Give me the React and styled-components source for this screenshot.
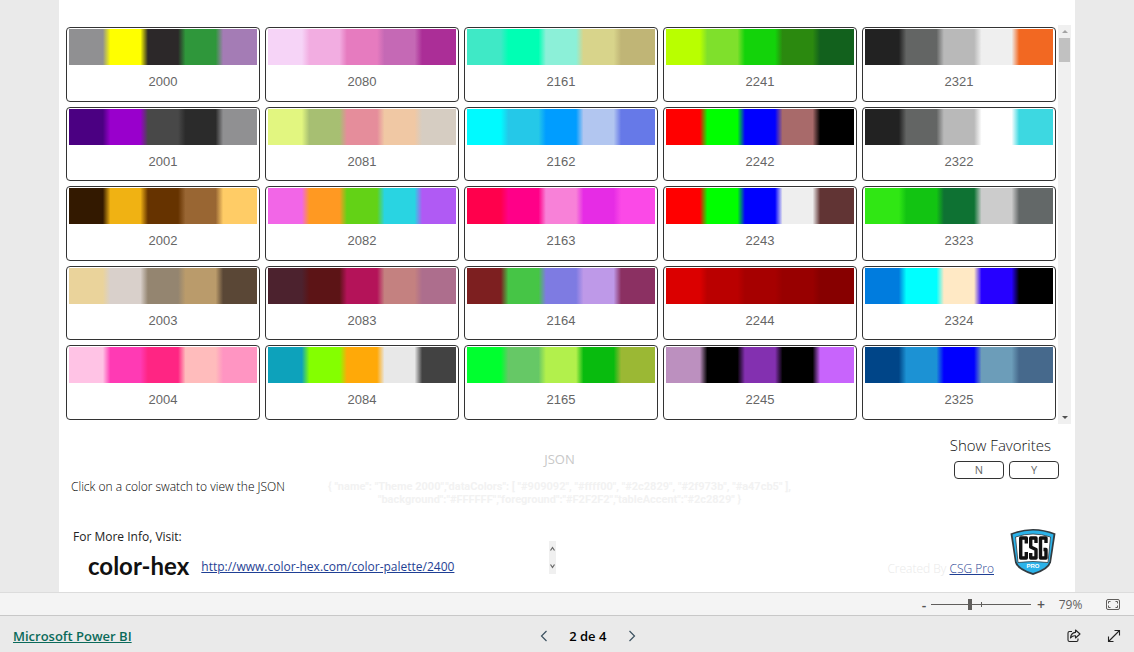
import React, { useState } from 'react';
import styled, { createGlobalStyle } from 'styled-components';

const sans = "'Open Sans', 'Noto Sans', sans-serif";

const palettes = [
  { id: 2000, colors: ['#909092', '#ffff00', '#2c2829', '#2f973b', '#a47cb5'] },
  { id: 2080, colors: ['#f6d4f7', '#f2ade1', '#e67bbf', '#c569b5', '#ab2e97'] },
  { id: 2161, colors: ['#3fe9c6', '#00ffb4', '#8cf0d8', '#d8d48b', '#c0b576'] },
  { id: 2241, colors: ['#b9ff00', '#7fe02c', '#13d30a', '#2b890f', '#12611d'] },
  { id: 2321, colors: ['#222222', '#636564', '#b9b9b9', '#efefef', '#f26822'] },
  { id: 2001, colors: ['#4b0082', '#9900cc', '#484848', '#2b2b2b', '#909092'] },
  { id: 2081, colors: ['#e2f680', '#a7bf72', '#e58d9b', '#f0c8a4', '#d6cdc2'] },
  { id: 2162, colors: ['#00faff', '#25c8e8', '#009dff', '#b2c6f0', '#6679e8'] },
  { id: 2242, colors: ['#ff0000', '#00ff00', '#0000ff', '#a86a6a', '#000000'] },
  { id: 2322, colors: ['#222222', '#636564', '#b9b9b9', '#ffffff', '#3dd8e1'] },
  { id: 2002, colors: ['#331900', '#f0b213', '#663300', '#996633', '#ffcc66'] },
  { id: 2082, colors: ['#f266e7', '#ff9922', '#63d216', '#29d4e2', '#b05af4'] },
  { id: 2163, colors: ['#ff004c', '#ff0088', '#f881d8', '#e62ce5', '#fb49e7'] },
  { id: 2243, colors: ['#ff0000', '#00ff00', '#0000ff', '#eeeeee', '#613434'] },
  { id: 2323, colors: ['#30e714', '#12c412', '#0e7233', '#cccccc', '#636868'] },
  { id: 2003, colors: ['#ead39b', '#d9d0cb', '#948570', '#ba9b6b', '#5a4736'] },
  { id: 2083, colors: ['#4c222e', '#5c1416', '#b41359', '#c48180', '#ad6e8d'] },
  { id: 2164, colors: ['#7d1f20', '#46c546', '#7e7be2', '#be99e8', '#8b3062'] },
  { id: 2244, colors: ['#db0000', '#ba0000', '#a60000', '#980000', '#870000'] },
  { id: 2324, colors: ['#007cde', '#00ffff', '#ffe9c5', '#2600ff', '#000000'] },
  { id: 2004, colors: ['#ffc3e5', '#ff3ab4', '#ff2583', '#ffbcbc', '#ff95c2'] },
  { id: 2084, colors: ['#0da2bb', '#84ff00', '#ffa908', '#e8e8e8', '#424242'] },
  { id: 2165, colors: ['#00ff2f', '#66c866', '#b2f04c', '#08bb0e', '#9bb834'] },
  { id: 2245, colors: ['#bc90bf', '#000000', '#8330b0', '#000000', '#c864fc'] },
  { id: 2325, colors: ['#004588', '#1c92d4', '#0000ff', '#6c9db9', '#46698c'] },
];

// five bands, with a short soft edge between neighbours
const bands = (colors) =>
  colors
    .map((c, i) => `${c} ${i === 0 ? 0 : i * 20 + 2}%, ${c} ${i === 4 ? 100 : i * 20 + 18}%`)
    .join(', ');

const Palette = ({ id, colors, onPick }) => (
  <Card type="button" onClick={() => onPick(id)}>
    <Swatch $colors={colors} />
    <CardLabel>{id}</CardLabel>
  </Card>
);

const Shield = () => (
  <svg width="46" height="48" viewBox="0 0 46 48" role="img" aria-label="CSG Pro">
    <path d="M.500 5.500Q23 -3.500 45.500 5.500L41 34.500Q39 42 23 47Q7 42 5 34.500Z" fill="#333b40" />
    <path d="M2.500 6.500Q23 -1.500 43.500 6.500L39.500 33.500Q37.500 40.500 23 45Q8.500 40.500 6.500 33.500Z" fill="#2bb3ea" />
    <path d="M5.500 9Q23 3 40.500 9L38 34.500Q23 32.500 8 34.500Z" fill="#fff" stroke="#333b40" strokeWidth=".8" />
    <g fill="none" stroke="#111" strokeWidth="3.400" strokeLinejoin="round">
      <path d="M16.300 15.500V10H10.700V30H16.300V24" />
      <path d="M26 15V10H20.700V19L26 21.500V30H20.700V25" />
      <path d="M36 15V10H30.500V30H36V21.500H33.500" />
    </g>
    <text x="23" y="40" textAnchor="middle" fontFamily="Liberation Sans, sans-serif" fontSize="6" fontWeight="700" fill="#fff">PRO</text>
  </svg>
);

const FitIcon = () => (
  <svg width="14" height="11" viewBox="0 0 14 11" fill="none" stroke="#605e5c">
    <rect x=".5" y=".5" width="13" height="10" rx="1.500" />
    <path d="M2.500 4.500V2.500H4.500M9.500 2.500H11.500V4.500M11.500 6.500V8.500H9.500M4.500 8.500H2.500V6.500" />
  </svg>
);

const ShareIcon = () => (
  <svg width="14" height="14" viewBox="0 0 14 14" fill="none" stroke="#222" strokeWidth="1.100" strokeLinejoin="round">
    <path d="M5 2.500H2.500Q1 2.500 1 4V11Q1 12.500 2.500 12.500H9.500Q11 12.500 11 11V9.500" />
    <path d="M8.500 1L13 5L8.500 9V6.800Q5.500 6.500 3.500 9Q4 3.800 8.500 3.400Z" />
  </svg>
);

const ExpandIcon = () => (
  <svg width="14" height="14" viewBox="0 0 14 14" fill="none" stroke="#222" strokeWidth="1.100">
    <path d="M1.500 12.500L12.500 1.500M7.500 1.500H12.500V6.500M1.500 7.500V12.500H6.500" />
  </svg>
);

const Chevron = ({ d }) => (
  <svg width="8" height="12" viewBox="0 0 8 12" fill="none" stroke="#3b5160" strokeWidth="1.200">
    <path d={d} />
  </svg>
);

const App = () => {
  const [, setPicked] = useState(2000);
  const [zoom, setZoom] = useState(79);

  return (
    <Page>
      <Global />
      <Report>
        <Canvas>
          <Gallery>
            <Grid>
              {palettes.map((p) => (
                <Palette key={p.id} id={p.id} colors={p.colors} onPick={setPicked} />
              ))}
            </Grid>
            <Track>
              <Arrow $color="#a3a3a3" />
              <Thumb />
              <Arrow $down $color="#505050" />
            </Track>
          </Gallery>

          <Details>
            <Hint>Click on a color swatch to view the JSON</Hint>
            <Json>
              <JsonTitle>JSON</JsonTitle>
              <JsonText>
                {'{ "name": "Theme 2000","dataColors": [ "#909092", "#ffff00", "#2c2829", "#2f973b", "#a47cb5" ],'}
                <br />
                {'"background":"#FFFFFF","foreground":"#F2F2F2","tableAccent":"#2c2829" }'}
              </JsonText>
            </Json>
            <Favorites>
              <FavTitle>Show Favorites</FavTitle>
              <FavRow>
                <FavButton type="button">N</FavButton>
                <FavButton type="button">Y</FavButton>
              </FavRow>
            </Favorites>
          </Details>

          <Info>
            <Source>
              <InfoText>For More Info, Visit:</InfoText>
              <SourceRow>
                <Wordmark>color-hex</Wordmark>
                <TextLink href="#palette">http://www.color-hex.com/color-palette/2400</TextLink>
              </SourceRow>
            </Source>
            <MiniTrack>
              <svg width="7" height="33" viewBox="0 0 7 33" fill="none" stroke="#666" strokeWidth="1.200">
                <path d="M1.500 9.500L3.500 6.500L5.500 9.500M1.500 23.500L3.500 26.500L5.500 23.500" />
              </svg>
            </MiniTrack>
            <Credit>
              <CreditText>
                Created By <TextLink href="#csg">CSG Pro</TextLink>
              </CreditText>
              <Shield />
            </Credit>
          </Info>
        </Canvas>
      </Report>

      <ZoomBar>
        <ZoomButton type="button" aria-label="Zoom out" onClick={() => setZoom(zoom - 1)}>-</ZoomButton>
        <Slider
          type="range"
          min="10"
          max="187"
          value={zoom}
          aria-label="Zoom"
          onChange={(e) => setZoom(Number(e.target.value))}
        />
        <ZoomButton type="button" aria-label="Zoom in" onClick={() => setZoom(zoom + 1)}>+</ZoomButton>
        <ZoomValue>{zoom}%</ZoomValue>
        <IconButton type="button" aria-label="Fit to page"><FitIcon /></IconButton>
      </ZoomBar>

      <Footer>
        <Brand href="#powerbi">Microsoft Power BI</Brand>
        <Pager>
          <IconButton type="button" aria-label="Previous page"><Chevron d="M6.500 1L1.500 6L6.500 11" /></IconButton>
          <PageCount>2 de 4</PageCount>
          <IconButton type="button" aria-label="Next page"><Chevron d="M1.500 1L6.500 6L1.500 11" /></IconButton>
        </Pager>
        <Tools>
          <IconButton type="button" aria-label="Share"><ShareIcon /></IconButton>
          <IconButton type="button" aria-label="Full screen"><ExpandIcon /></IconButton>
        </Tools>
      </Footer>
    </Page>
  );
};

export default App;

const Global = createGlobalStyle`
  * { box-sizing: border-box; }
  body {
    margin: 0;
    font-family: ${sans};
    background: #eaeaea;
  }
  button {
    font-family: inherit;
    cursor: pointer;
  }
  svg { display: block; }
`;

const Page = styled.div`
  display: flex;
  flex-direction: column;
  min-height: 100vh;
`;

const Report = styled.main`
  flex: 1;
  display: flex;
  padding: 0 59px;
`;

const Canvas = styled.div`
  flex: 1;
  min-width: 0;
  padding: 25px 4px 0 7px;
  background: #fff;
`;

const Gallery = styled.section`
  display: flex;
  gap: 2px;
`;

const Grid = styled.div`
  flex: 1;
  display: grid;
  grid-template-columns: repeat(5, 1fr);
  grid-auto-rows: 1fr;
  gap: 5px;
  height: 395px;
  padding-top: 2px;
`;

const Card = styled.button`
  display: flex;
  flex-direction: column;
  min-width: 0;
  padding: 1px;
  border: 1px solid #333;
  border-radius: 4px;
  background: #fff;
`;

const Swatch = styled.span`
  align-self: stretch;
  height: 36px;
  margin: 0 1px;
  background: linear-gradient(to right, ${(p) => bands(p.$colors)});
`;

const CardLabel = styled.span`
  align-self: center;
  margin-top: 7px;
  font-family: 'Liberation Sans', sans-serif;
  font-size: 13px;
  line-height: 20px;
  color: #666;
`;

const Track = styled.div`
  display: flex;
  flex-direction: column;
  align-items: center;
  width: 13px;
  height: 399px;
  padding: 5px 0;
  background: #f0f0f0;
`;

const Arrow = styled.span`
  margin-top: ${(p) => (p.$down ? 'auto' : '0')};
  border: 3px solid transparent;
  border-top: ${(p) => (p.$down ? `3px solid ${p.$color}` : '0')};
  border-bottom: ${(p) => (p.$down ? '0' : `3px solid ${p.$color}`)};
`;

const Thumb = styled.span`
  width: 11px;
  height: 24px;
  margin-top: 5px;
  background: #c1c1c1;
`;

const Details = styled.section`
  display: grid;
  grid-template-columns: 240px 1fr 258px;
  height: 103px;
`;

const Hint = styled.p`
  margin: 53px 0 0 5px;
  font-size: 12px;
  font-weight: 300;
  line-height: 20px;
  white-space: nowrap;
  color: #000;
`;

const Json = styled.div`
  padding-top: 25px;
  text-align: center;
`;

const JsonTitle = styled.h2`
  margin: 0;
  font-size: 13px;
  font-weight: 400;
  line-height: 20px;
  color: #c8c8c8;
`;

const JsonText = styled.p`
  margin: 11px 0 0;
  font-family: Roboto, sans-serif;
  font-size: 11px;
  font-weight: 700;
  line-height: 13px;
  white-space: nowrap;
  color: #f2f2f2;
`;

const Favorites = styled.div`
  display: flex;
  flex-direction: column;
  align-items: flex-end;
  padding: 11px 12px 0 0;
`;

const FavTitle = styled.h2`
  margin: 0;
  padding-right: 8px;
  font-size: 15px;
  font-weight: 300;
  line-height: 20px;
  color: #111;
`;

const FavRow = styled.div`
  display: flex;
  gap: 5px;
  margin-top: 6px;
`;

const FavButton = styled.button`
  width: 50px;
  height: 18px;
  padding: 0;
  border: 1px solid #333;
  border-radius: 4px;
  font-size: 11px;
  line-height: 16px;
  color: #666;
  background: #fff;
`;

const Info = styled.section`
  display: flex;
  height: 65px;
`;

const Source = styled.div`
  width: 483px;
  padding-left: 7px;
`;

const InfoText = styled.p`
  margin: 0;
  font-size: 12px;
  line-height: 20px;
  color: #222;
`;

const SourceRow = styled.div`
  display: flex;
  align-items: center;
  gap: 12px;
  height: 40px;
  padding-left: 15px;
`;

const Wordmark = styled.strong`
  padding-bottom: 2px;
  font-family: Lato, sans-serif;
  font-size: 24px;
  font-weight: 700;
  line-height: 28px;
  color: #111;
`;

const TextLink = styled.a`
  font-size: 12px;
  line-height: 20px;
  color: #1f3f94;
`;

const MiniTrack = styled.div`
  align-self: flex-start;
  margin-top: 14px;
  background: #f0f0f0;
`;

const Credit = styled.div`
  flex: 1;
  display: flex;
  justify-content: flex-end;
  gap: 16px;
  padding: 1px 15px 0 0;
`;

const CreditText = styled.p`
  margin: 31px 0 0;
  font-size: 12px;
  font-weight: 300;
  line-height: 20px;
  color: #eaeaea;
`;

const IconButton = styled.button`
  display: flex;
  align-items: center;
  justify-content: center;
  width: 40px;
  height: 22px;
  padding: 0;
  border: 0;
  background: none;
`;

const ZoomBar = styled.div`
  display: flex;
  align-items: center;
  justify-content: flex-end;
  height: 24px;
  padding: 1px 1px 0 0;
  border-top: 1px solid #dcdcdc;
  border-bottom: 1px solid #c8c8c8;
  background: #f4f4f4;
`;

const ZoomButton = styled.button`
  width: 14px;
  padding: 0;
  border: 0;
  font-size: 14px;
  font-weight: 600;
  line-height: 20px;
  color: #555;
  background: none;
`;

const Slider = styled.input`
  appearance: none;
  width: 100px;
  height: 11px;
  margin: 0 3px 0 0;
  background:
    linear-gradient(#605e5c, #605e5c) 50px 50% / 1px 5px no-repeat,
    linear-gradient(#605e5c, #605e5c) 0 50% / 100% 1px no-repeat;
  &::-webkit-slider-thumb {
    appearance: none;
    width: 4px;
    height: 11px;
    background: #605e5c;
  }
`;

const ZoomValue = styled.span`
  width: 45px;
  text-align: center;
  font-size: 12px;
  line-height: 20px;
  color: #605e5c;
`;

const Footer = styled.footer`
  display: flex;
  align-items: center;
  justify-content: space-between;
  height: 36px;
  padding: 3px 0 0 13px;
  background: #eaeaea;
`;

const Brand = styled.a`
  font-size: 13px;
  font-weight: 600;
  line-height: 20px;
  color: #0b6a5a;
`;

const Pager = styled.nav`
  display: flex;
  align-items: center;
`;

const PageCount = styled.span`
  width: 48px;
  text-align: center;
  font-size: 13px;
  font-weight: 600;
  line-height: 20px;
  color: #000;
`;

const Tools = styled.div`
  display: flex;
  justify-content: flex-end;
  width: 90px;
`;
